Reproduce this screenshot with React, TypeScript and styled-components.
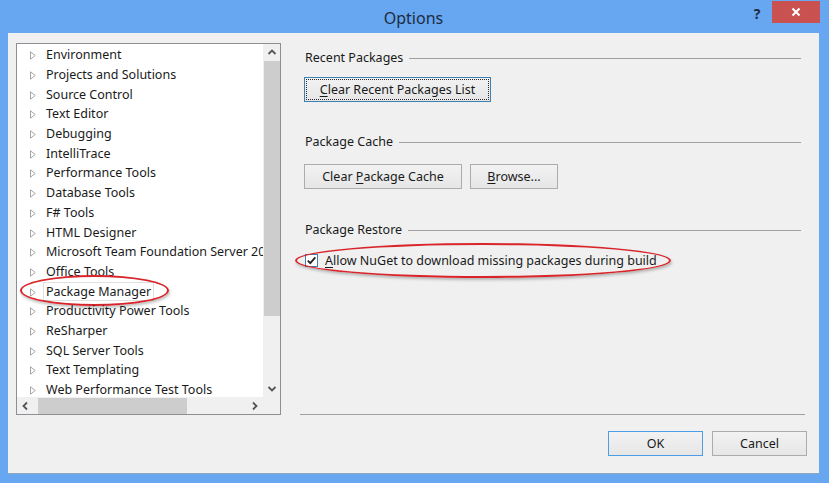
import React from "react";
import styled, { createGlobalStyle } from "styled-components";

const Global = createGlobalStyle`
  html, body { margin: 0; padding: 0; }
  body { width: 829px; height: 483px; overflow: hidden; font-family: "Noto Sans", "Open Sans", sans-serif; }
  * { box-sizing: border-box; }
`;

const Window = styled.div`
  width: 829px;
  height: 483px;
  background: #67a7f1;
  display: flex;
  flex-direction: column;
  padding: 0 10px 9px 8px;
`;

const TitleBar = styled.div`
  height: 33px;
  position: relative;
  display: flex;
  align-items: center;
  justify-content: center;
`;

const Title = styled.div`
  font-size: 16px;
  color: #1c2b41;
  margin-top: 2px;
`;

const TitleButtons = styled.div`
  position: absolute;
  right: -1px;
  top: 1px;
  display: flex;
  align-items: flex-start;
`;

const HelpBtn = styled.div`
  width: 30px;
  height: 22px;
  display: flex;
  align-items: center;
  justify-content: center;
  font-weight: bold;
  font-size: 14px;
  color: #1c2b41;
  margin-top: 1px;
`;

const CloseBtn = styled.div`
  width: 48px;
  height: 22px;
  background: #c9514f;
  display: flex;
  align-items: center;
  justify-content: center;
`;

const Client = styled.div`
  flex: 1;
  background: #f0f0f0;
  display: flex;
  flex-direction: column;
  padding: 10px 14px 0 8px;
  border-bottom: 1px solid #8fa6be;
`;

const Body = styled.div`
  display: flex;
  height: 372px;
`;

const TreeBox = styled.div`
  width: 265px;
  height: 372px;
  border: 1px solid #8c9095;
  background: #ffffff;
  display: grid;
  grid-template-columns: 1fr 17px;
  grid-template-rows: 1fr 17px;
`;

const TreeList = styled.div`
  overflow: hidden;
  padding-top: 1px;
`;

const TreeRow = styled.div`
  position: relative;
  height: 19.7px;
  display: flex;
  align-items: center;
  white-space: nowrap;
  font-size: 12.5px;
  color: #1a1a1a;
  padding-left: 13px;
`;

const Arrow = styled.span`
  width: 15px;
  flex-shrink: 0;
  display: inline-flex;
  align-items: center;
  margin-top: 2px;
`;

const Label = styled.span<{ $selected?: boolean }>`
  padding: 0 2px;
  margin-left: -2px;
  border: 1px solid ${(p) => (p.$selected ? "#e0e0e0" : "transparent")};
  line-height: 17px;
  flex-shrink: 0;
`;

const VScroll = styled.div`
  background: #f0f0f0;
  display: flex;
  flex-direction: column;
  align-items: center;
`;

const ScrollArrowBox = styled.div<{ $w?: number; $h?: number }>`
  width: ${(p) => p.$w ?? 17}px;
  height: ${(p) => p.$h ?? 17}px;
  display: flex;
  align-items: center;
  justify-content: center;
  flex-shrink: 0;
`;

const VThumb = styled.div`
  width: 16px;
  height: 255px;
  background: #cdcdcd;
`;

const Spacer = styled.div`
  flex: 1;
`;

const HScroll = styled.div`
  background: #f0f0f0;
  display: flex;
  align-items: center;
`;

const HThumb = styled.div`
  width: 149px;
  height: 16px;
  background: #cdcdcd;
  margin-left: 3px;
`;

const Corner = styled.div`
  background: #f0f0f0;
`;

const RightPane = styled.div`
  flex: 1;
  margin-left: 19px;
  height: 372px;
  border-bottom: 1px solid #a0a0a0;
  padding: 5px 0 0 5px;
  display: flex;
  flex-direction: column;
`;

const SectionHeader = styled.div<{ $top: number }>`
  display: flex;
  align-items: center;
  gap: 6px;
  margin-top: ${(p) => p.$top}px;
  font-size: 12.5px;
  color: #1a1a1a;
  height: 18px;
  padding-right: 4px;
`;

const HeaderLine = styled.div`
  flex: 1;
  height: 1px;
  background: #a0a0a0;
  margin-top: 2px;
`;

const ButtonRow = styled.div<{ $top: number }>`
  display: flex;
  gap: 9px;
  margin-top: ${(p) => p.$top}px;
`;

const Button = styled.button<{ $w: number; $h?: number; $focused?: boolean; $default?: boolean }>`
  width: ${(p) => p.$w}px;
  height: ${(p) => p.$h ?? 25}px;
  font-family: inherit;
  font-size: 12.5px;
  color: #1a1a1a;
  background: linear-gradient(#f2f2f2, #e6e6e6);
  border: 1px solid ${(p) => (p.$focused ? "#3c7fb1" : p.$default ? "#4b9ee6" : "#acacac")};
  padding: 0;
  position: relative;
  display: flex;
  align-items: center;
  justify-content: center;
  margin-left: -1px;
  ${(p) =>
    p.$focused
      ? `&::after { content: ""; position: absolute; inset: 1px; border: 1px dotted #2a2a2a; }`
      : ""}
`;

const U = styled.span`
  text-decoration: underline;
  text-underline-offset: 2px;
`;

const CheckRow = styled.div`
  position: relative;
  display: flex;
  align-items: center;
  gap: 7px;
  margin-top: 13px;
  font-size: 12.5px;
  color: #1a1a1a;
  height: 18px;
`;

const CheckBox = styled.div`
  width: 13px;
  height: 13px;
  border: 1px solid #3c7fb1;
  background: #ffffff;
  display: flex;
  align-items: center;
  justify-content: center;
`;

const Ellipse = styled.div<{ $l: number; $t: number; $w: number; $h: number }>`
  position: absolute;
  left: ${(p) => p.$l}px;
  top: ${(p) => p.$t}px;
  width: ${(p) => p.$w}px;
  height: ${(p) => p.$h}px;
  border: 2px solid #d9252a;
  border-radius: 50%;
  box-shadow: 1px 2px 3px rgba(0, 0, 0, 0.25);
  pointer-events: none;
`;

const Footer = styled.div`
  display: flex;
  justify-content: flex-end;
  gap: 10px;
  padding-top: 16px;
  margin-right: -2px;
`;

const TriIcon = () => (
  <svg width="6" height="9" viewBox="0 0 6 9">
    <path d="M0.5 0.8 L5.2 4.5 L0.5 8.2 Z" fill="none" stroke="#a6a6a6" strokeWidth="1" />
  </svg>
);

const Chevron = ({ dir }: { dir: "up" | "down" | "left" | "right" }) => {
  const d = {
    up: "M1.5 6 L5 2.5 L8.5 6",
    down: "M1.5 3 L5 6.5 L8.5 3",
    left: "M6 1.5 L2.5 5 L6 8.5",
    right: "M3 1.5 L6.5 5 L3 8.5",
  }[dir];
  return (
    <svg width="10" height="10" viewBox="0 0 10 10">
      <path d={d} fill="none" stroke="#555" strokeWidth="1.8" />
    </svg>
  );
};

const items = [
  "Environment",
  "Projects and Solutions",
  "Source Control",
  "Text Editor",
  "Debugging",
  "IntelliTrace",
  "Performance Tools",
  "Database Tools",
  "F# Tools",
  "HTML Designer",
  "Microsoft Team Foundation Server 2010 Power Tools",
  "Office Tools",
  "Package Manager",
  "Productivity Power Tools",
  "ReSharper",
  "SQL Server Tools",
  "Text Templating",
  "Web Performance Test Tools",
];

export default function App() {
  return (
    <>
      <Global />
      <Window>
        <TitleBar>
          <Title>Options</Title>
          <TitleButtons>
            <HelpBtn>?</HelpBtn>
            <CloseBtn>
              <svg width="10" height="10" viewBox="0 0 10 10">
                <path d="M1.5 1.5 L8.5 8.5 M8.5 1.5 L1.5 8.5" stroke="#fff" strokeWidth="2" />
              </svg>
            </CloseBtn>
          </TitleButtons>
        </TitleBar>
        <Client>
          <Body>
            <TreeBox>
              <TreeList>
                {items.map((it) => (
                  <TreeRow key={it}>
                    <Arrow>
                      <TriIcon />
                    </Arrow>
                    <Label $selected={it === "Package Manager"}>{it}</Label>
                    {it === "Package Manager" && <Ellipse $l={3} $t={-6} $w={149} $h={31} />}
                  </TreeRow>
                ))}
              </TreeList>
              <VScroll>
                <ScrollArrowBox>
                  <Chevron dir="up" />
                </ScrollArrowBox>
                <VThumb />
                <Spacer />
                <ScrollArrowBox>
                  <Chevron dir="down" />
                </ScrollArrowBox>
              </VScroll>
              <HScroll>
                <ScrollArrowBox $w={18}>
                  <Chevron dir="left" />
                </ScrollArrowBox>
                <HThumb />
                <Spacer />
                <ScrollArrowBox>
                  <Chevron dir="right" />
                </ScrollArrowBox>
              </HScroll>
              <Corner />
            </TreeBox>
            <RightPane>
              <SectionHeader $top={0}>
                Recent Packages
                <HeaderLine />
              </SectionHeader>
              <ButtonRow $top={11}>
                <Button $w={187} $focused>
                  <span>
                    <U>C</U>lear Recent Packages List
                  </span>
                </Button>
              </ButtonRow>
              <SectionHeader $top={30}>
                Package Cache
                <HeaderLine />
              </SectionHeader>
              <ButtonRow $top={14}>
                <Button $w={158}>
                  <span>
                    Clear <U>P</U>ackage Cache
                  </span>
                </Button>
                <Button $w={88}>
                  <span>
                    <U>B</U>rowse...
                  </span>
                </Button>
              </ButtonRow>
              <SectionHeader $top={31}>
                Package Restore
                <HeaderLine />
              </SectionHeader>
              <CheckRow>
                <CheckBox>
                  <svg width="11" height="11" viewBox="0 0 11 11">
                    <path d="M1.8 5.6 L4.3 8.2 L9.3 2.3" fill="none" stroke="#222" strokeWidth="1.8" />
                  </svg>
                </CheckBox>
                <span>
                  <U>A</U>llow NuGet to download missing packages during build
                </span>
                <Ellipse $l={-10} $t={-8} $w={376} $h={35} />
              </CheckRow>
            </RightPane>
          </Body>
          <Footer>
            <Button $w={95} $h={25} $default>
              OK
            </Button>
            <Button $w={95} $h={25}>
              Cancel
            </Button>
          </Footer>
        </Client>
      </Window>
    </>
  );
}
